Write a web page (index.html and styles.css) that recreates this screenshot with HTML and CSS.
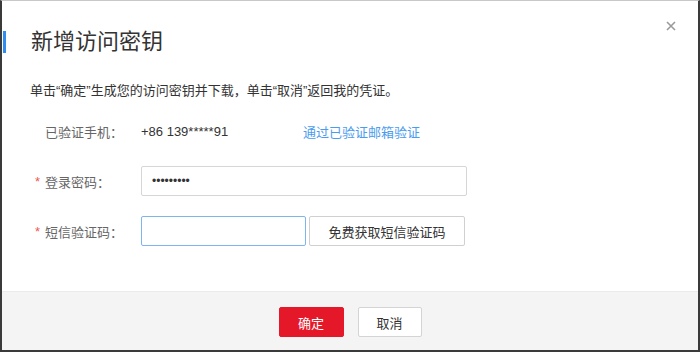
FILE: index.html
```html
<!DOCTYPE html>
<html>
<head>
    <title>新增访问密钥</title>
    <link rel="stylesheet" href="styles.css">
</head>
<body>
    <div class="dialog">
        <button type="button" class="close-btn" aria-label="关闭">
            <svg width="10" height="10" viewBox="0 0 10 10">
                <path d="M1 1L9 9M9 1L1 9" stroke="#9a9a9a" stroke-width="1.6" fill="none"/>
            </svg>
        </button>

        <div class="header">
            <span class="title-bar"></span>
            <h1>新增访问密钥</h1>
        </div>

        <p class="desc">单击“确定”生成您的访问密钥并下载，单击“取消”返回我的凭证。</p>

        <div class="form">
            <div class="row">
                <label class="label">已验证手机：</label>
                <span class="value">+86 139*****91</span>
                <a class="link" href="#">通过已验证邮箱验证</a>
            </div>
            <div class="row">
                <label class="label required">登录密码：</label>
                <input type="password" class="input input-wide" value="123456789">
            </div>
            <div class="row">
                <label class="label required">短信验证码：</label>
                <input type="text" class="input input-short focused">
                <button type="button" class="btn btn-code">免费获取短信验证码</button>
            </div>
        </div>

        <div class="footer">
            <button type="button" class="btn btn-primary">确定</button>
            <button type="button" class="btn btn-default">取消</button>
        </div>
    </div>
</body>
</html>
```

FILE: styles.css
```css
/* Global styles */
* {
    margin: 0;
    padding: 0;
    box-sizing: border-box;
}

body {
    font-family: "Liberation Sans", "Noto Sans CJK SC", sans-serif;
    font-size: 13px;
    color: #333;
    background-color: #fff;
}

.dialog {
    position: relative;
    width: 700px;
    height: 352px;
    display: flex;
    flex-direction: column;
    border-top: 1px solid #c8c8c8;
    border-left: 2px solid #3a3a3a;
    border-right: 2px solid #3a3a3a;
    border-bottom: 2px solid #3a3a3a;
    background-color: #fff;
}

.close-btn {
    position: absolute;
    top: 20px;
    right: 22px;
    width: 10px;
    height: 10px;
    border: none;
    background: none;
    cursor: pointer;
    display: flex;
}

/* Header */
.header {
    display: flex;
    align-items: center;
    margin-top: 29px;
    height: 24px;
}

.title-bar {
    width: 3px;
    height: 22px;
    margin-left: 1px;
    background-color: #2f8cf0;
}

.header h1 {
    margin-left: 25px;
    font-size: 22px;
    font-weight: normal;
    line-height: 24px;
    color: #333;
}

.desc {
    margin: 27px 0 0 28px;
    line-height: 20px;
    color: #333;
}

/* Form */
.form {
    margin-top: 15px;
    display: flex;
    flex-direction: column;
    gap: 20px;
}

.row {
    display: flex;
    align-items: center;
    height: 30px;
}

.label {
    position: relative;
    width: 139px;
    padding-left: 43px;
    color: #666;
}

.label.required::before {
    content: "*";
    position: absolute;
    left: 33px;
    top: 2px;
    color: #f0594f;
    font-size: 13px;
}

.value {
    width: 162px;
    color: #333;
}

.link {
    color: #4b9cf0;
    text-decoration: none;
}

.input {
    height: 30px;
    border: 1px solid #d6d6d6;
    border-radius: 2px;
    padding: 0 10px;
    font-size: 12px;
    color: #333;
    outline: none;
}

.input-wide {
    width: 326px;
}

.input-short {
    width: 165px;
}

.input.focused {
    border-color: #80b4ee;
}

/* Buttons */
.btn {
    height: 30px;
    border-radius: 2px;
    font-family: inherit;
    font-size: 13px;
    cursor: pointer;
}

.btn-code {
    width: 156px;
    margin-left: 3px;
    border: 1px solid #d0d0d0;
    background-color: #fff;
    color: #333;
}

.footer {
    margin-top: auto;
    height: 59px;
    padding-top: 15px;
    display: flex;
    justify-content: center;
    align-items: flex-start;
    gap: 14px;
    background-color: #f4f4f4;
    border-top: 1px solid #ebebeb;
}

.btn-primary {
    width: 65px;
    border: 1px solid #e5182a;
    background-color: #e5182a;
    color: #fff;
}

.btn-default {
    width: 64px;
    border: 1px solid #d4d4d4;
    background-color: #fff;
    color: #333;
}
```
